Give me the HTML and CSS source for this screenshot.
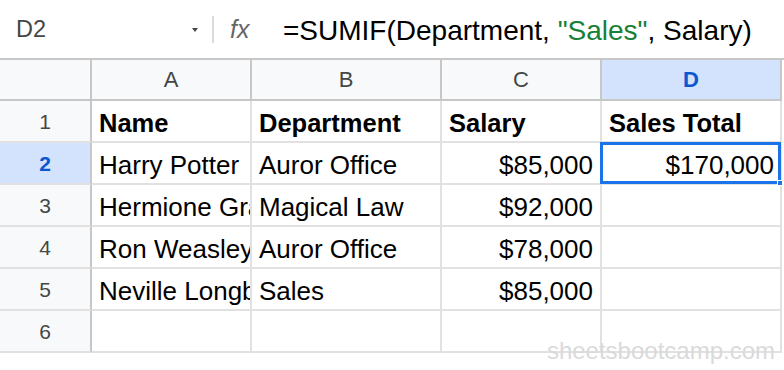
FILE: index.html
```html
<!DOCTYPE html>
<html>
<head>
<meta charset="utf-8">
<link rel="stylesheet" href="styles.css">
</head>
<body>
<div class="app">
  <div class="fbar">
    <div class="namebox"><span class="ref">D2</span><span class="caret"></span></div>
    <div class="sep"></div>
    <div class="fx">fx</div>
    <div class="formula">=SUMIF(Department, <span class="str">"Sales"</span>, Salary)</div>
  </div>
  <div class="grid">
    <div class="corner"></div>
    <div class="colh">A</div>
    <div class="colh">B</div>
    <div class="colh">C</div>
    <div class="colh sel">D</div>
    <div class="pad"></div>

    <div class="rowh">1</div>
    <div class="cell b">Name</div>
    <div class="cell b">Department</div>
    <div class="cell b">Salary</div>
    <div class="cell b">Sales Total</div>
    <div class="pad"></div>

    <div class="rowh sel">2</div>
    <div class="cell">Harry Potter</div>
    <div class="cell">Auror Office</div>
    <div class="cell num">$85,000</div>
    <div class="cell num active">$170,000<span class="handle"></span></div>
    <div class="pad"></div>

    <div class="rowh">3</div>
    <div class="cell">Hermione Granger</div>
    <div class="cell">Magical Law</div>
    <div class="cell num">$92,000</div>
    <div class="cell"></div>
    <div class="pad"></div>

    <div class="rowh">4</div>
    <div class="cell">Ron Weasley</div>
    <div class="cell">Auror Office</div>
    <div class="cell num">$78,000</div>
    <div class="cell"></div>
    <div class="pad"></div>

    <div class="rowh">5</div>
    <div class="cell">Neville Longbottom</div>
    <div class="cell">Sales</div>
    <div class="cell num">$85,000</div>
    <div class="cell"></div>
    <div class="pad"></div>

    <div class="rowh">6</div>
    <div class="cell"></div>
    <div class="cell"></div>
    <div class="cell"></div>
    <div class="cell"></div>
    <div class="pad"></div>
  </div>
  <div class="watermark">sheetsbootcamp.com</div>
</div>
</body>
</html>
```
FILE: styles.css
```css
* { box-sizing: border-box; }
html, body { margin: 0; padding: 0; background: #fff; }
body { font-family: "Liberation Sans", Arial, sans-serif; color: #000; }
.app { position: relative; width: 784px; height: 370px; overflow: hidden; }

.fbar { height: 58px; display: flex; align-items: center; }
.namebox { width: 212px; padding-left: 16px; padding-right: 14px; display: flex; align-items: center; justify-content: space-between; }
.ref { font-size: 23.5px; color: #444746; }
.caret { width: 0; height: 0; border-left: 3.5px solid transparent; border-right: 3.5px solid transparent; border-top: 4px solid #444746; margin-top: 2px; }
.sep { width: 2px; height: 27px; background: #dadce0; }
.fx { margin-left: 16px; font-size: 25px; font-style: italic; color: #666; width: 37px; }
.formula { margin-left: 16px; font-size: 28px; color: #000; white-space: nowrap; padding-top: 3px; }
.str { color: #188038; }

.grid { display: grid; grid-template-columns: 92px 160px 190px 160px 180px 1fr; grid-template-rows: 41px repeat(6, 42px); border-top: 2px solid #c7c7c7; }
.corner, .colh { background: #f8f9fa; border-right: 2px solid #c7c7c7; border-bottom: 2px solid #c7c7c7; }
.colh { display: flex; align-items: center; justify-content: center; font-size: 22px; color: #444746; padding-top: 1px; }
.colh.sel { background: #d3e3fd; color: #0b57d0; font-weight: bold; }
.rowh { background: #f8f9fa; border-right: 2px solid #c7c7c7; border-bottom: 2px solid #e1e1e1; display: flex; align-items: center; justify-content: center; font-size: 21px; color: #444746; padding-top: 2px; }
.rowh.sel { background: #d3e3fd; color: #0b57d0; font-weight: bold; }
.pad { background: #fff; }

.cell { border-right: 2px solid #e1e1e1; border-bottom: 2px solid #e1e1e1; font-size: 26px; line-height: 40px; padding: 2px 7px 0 7px; white-space: nowrap; overflow: hidden; position: relative; }
.cell.b { font-weight: bold; font-size: 25.5px; }
.cell.num { text-align: right; }
.cell.active { overflow: visible; padding-right: 6px; }
.cell.active::after { content: ""; position: absolute; left: -2px; top: -1px; right: -1px; bottom: -1px; border: 3px solid #1a73e8; pointer-events: none; }
.handle { position: absolute; right: -3px; bottom: -3px; width: 6px; height: 6px; background: #1a73e8; border: 1px solid #fff; z-index: 2; }

.watermark { position: absolute; right: 9px; top: 337px; font-size: 24px; color: #dadada; white-space: nowrap; }
```
